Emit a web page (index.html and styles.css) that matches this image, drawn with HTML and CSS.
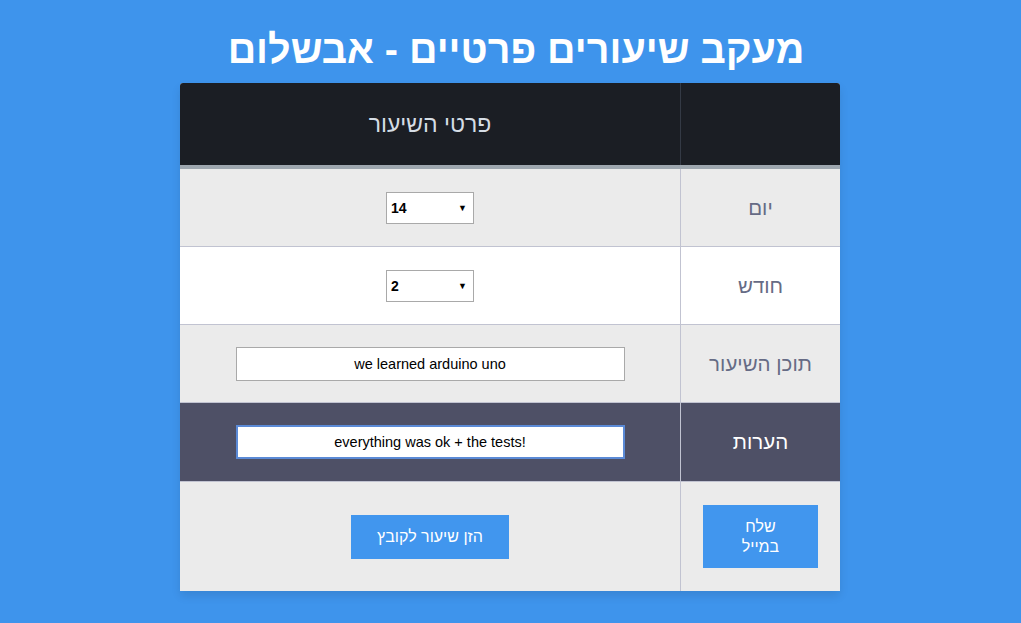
FILE: index.html
```html
<!DOCTYPE html>
<html lang="he" dir="rtl">
<head>
<meta charset="utf-8">
<title>מעקב שיעורים</title>
<link rel="stylesheet" href="styles.css">
</head>
<body>
<h1 class="title">מעקב שיעורים פרטיים - אבשלום</h1>
<table class="table-fill">
  <thead>
    <tr>
      <th class="col-label"></th>
      <th class="col-value">פרטי השיעור</th>
    </tr>
  </thead>
  <tbody>
    <tr class="row-gray">
      <td class="col-label">יום</td>
      <td class="col-value">
        <div class="select"><span class="select-val">14</span><span class="select-arrow">▼</span></div>
      </td>
    </tr>
    <tr class="row-white">
      <td class="col-label">חודש</td>
      <td class="col-value">
        <div class="select"><span class="select-val">2</span><span class="select-arrow">▼</span></div>
      </td>
    </tr>
    <tr class="row-gray">
      <td class="col-label">תוכן השיעור</td>
      <td class="col-value"><input class="text-input" type="text" value="we learned arduino uno" dir="ltr"></td>
    </tr>
    <tr class="row-hover">
      <td class="col-label">הערות</td>
      <td class="col-value"><input class="text-input focused" type="text" value="everything was ok + the tests!" dir="ltr"></td>
    </tr>
    <tr class="row-gray row-last">
      <td class="col-label"><button class="btn btn-mail">שלח<br>במייל</button></td>
      <td class="col-value"><button class="btn btn-save">הזן שיעור לקובץ</button></td>
    </tr>
  </tbody>
</table>
</body>
</html>
```
FILE: styles.css
```css
html, body {
  margin: 0;
  padding: 0;
}
body {
  background: #3e94ec;
  font-family: "Liberation Sans", Arial, sans-serif;
  height: 623px;
  overflow: hidden;
  padding-right: 1px;
}
.title {
  margin: 0;
  padding-top: 25px;
  padding-left: 12px;
  height: 83px;
  box-sizing: border-box;
  text-align: center;
  color: #ffffff;
  font-size: 39.5px;
  line-height: 48px;
  font-weight: bold;
}
.table-fill {
  width: 660px;
  margin: 0 auto;
  border-collapse: collapse;
  background: #ffffff;
  border-radius: 3px;
  box-shadow: 0 5px 10px rgba(0, 0, 0, 0.1);
}
.table-fill th {
  background: #1b1e24;
  color: #d5dde5;
  font-size: 23px;
  font-weight: normal;
  height: 82px;
  padding: 0;
  border-bottom: 4px solid #9ea7af;
  vertical-align: middle;
  text-align: center;
}
.table-fill th.col-label {
  border-left: 1px solid #343a45;
  border-top-right-radius: 3px;
}
.table-fill th.col-value {
  border-top-left-radius: 3px;
}
.col-label {
  width: 159px;
}
.table-fill td {
  padding: 0;
  text-align: center;
  vertical-align: middle;
  height: 77px;
  border-bottom: 1px solid #c1c3d1;
  color: #666b85;
  font-size: 20.5px;
}
.table-fill td.col-label {
  border-left: 1px solid #c1c3d1;
}
.row-gray td {
  background: #ebebeb;
}
.row-white td {
  background: #ffffff;
}
.row-hover td {
  background: #4e5066;
  color: #ffffff;
  border-top: 1px solid #22262e;
  height: 78px;
}
.row-last td {
  height: 109px;
  border-bottom: 0;
}
.select {
  display: inline-flex;
  direction: ltr;
  align-items: center;
  justify-content: space-between;
  box-sizing: border-box;
  width: 88px;
  height: 32px;
  padding: 0 6px 0 4px;
  background: #ffffff;
  border: 1px solid #a9a9a9;
  vertical-align: middle;
}
.select-val {
  font-family: "Liberation Sans", Arial, sans-serif;
  font-weight: bold;
  font-size: 14px;
  color: #000000;
}
.select-arrow {
  font-size: 9px;
  color: #000000;
}
.text-input {
  box-sizing: border-box;
  width: 389px;
  height: 34px;
  border: 1px solid #a9a9a9;
  background: #ffffff;
  text-align: center;
  font-family: "Liberation Sans", Arial, sans-serif;
  font-size: 14.5px;
  color: #000000;
  padding: 0 4px;
  outline: none;
  vertical-align: middle;
}
.text-input.focused {
  border: 2px solid #5b8ad6;
}
.btn {
  border: 0;
  background: #4196ee;
  color: #ffffff;
  font-family: "Liberation Sans", Arial, sans-serif;
  font-size: 16px;
  cursor: pointer;
  vertical-align: middle;
}
.btn-save {
  width: 158px;
  height: 44px;
}
.btn-mail {
  width: 115px;
  height: 63px;
  line-height: 20px;
}
```
